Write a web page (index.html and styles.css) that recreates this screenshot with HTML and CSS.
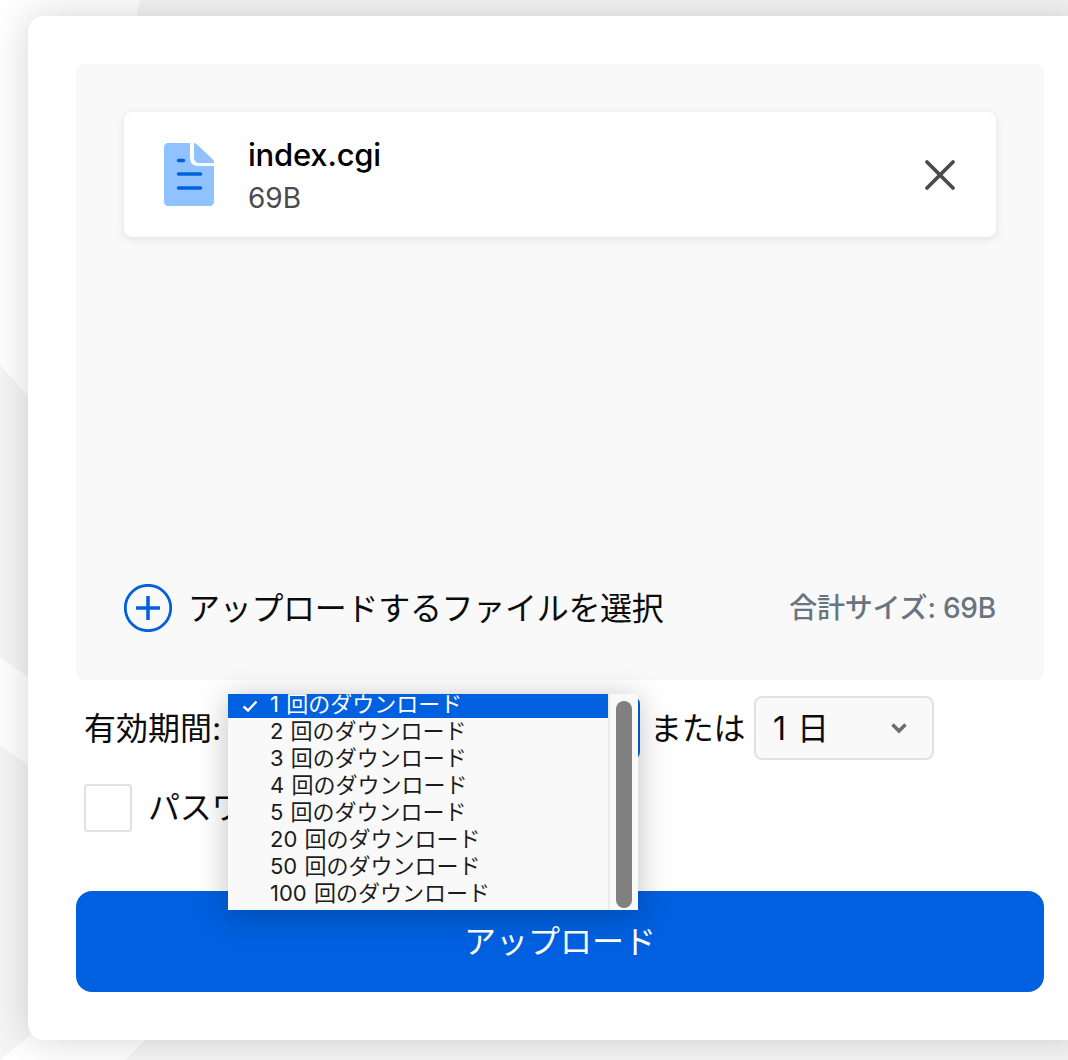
FILE: index.html
```html
<!DOCTYPE html>
<html lang="ja">
<head>
<meta charset="utf-8">
<title>アップロード</title>
<link rel="stylesheet" href="styles.css">
</head>
<body>
<svg class="backdrop" width="1068" height="1060" viewBox="0 0 1068 1060" aria-hidden="true">
  <polygon class="shade" points="140,0 1068,0 1068,60 128,60"/>
  <polygon class="shade" points="0,365 60,432 60,700 0,657"/>
  <polygon class="shade" points="0,745 60,788 60,1010 0,1060"/>
  <polygon class="shade" points="125,1060 150,1035 1068,1035 1068,1060"/>
</svg>
<main class="card">
  <section class="zone">
    <div class="file">
      <svg class="file-icon" width="50" height="63" viewBox="0 0 50 63" aria-hidden="true">
        <path class="page" d="M4 0H26V15C26 20 29 23 34 23H50V59C50 61 48 63 46 63H4C2 63 0 61 0 59V4C0 2 2 0 4 0Z"/>
        <path class="page" d="M30 0C31 0 32 .5 33 1.500L49 16.500C50 17.500 50 18.500 50 20H36C32 20 30 18 30 14Z"/>
        <path class="lines" d="M14.500 17.500H19.500M14.500 31H36.500M14.500 45H36.500"/>
      </svg>
      <div class="file-text">
        <div class="file-name">index.cgi</div>
        <div class="file-size">69B</div>
      </div>
      <svg class="close" width="32" height="32" viewBox="0 0 32 32" aria-hidden="true">
        <path d="M3 3L29 29M29 3L3 29"/>
      </svg>
    </div>
    <div class="zone-foot">
      <div class="add">
        <svg class="plus" width="48" height="48" viewBox="0 0 48 48" aria-hidden="true">
          <circle cx="24" cy="24" r="22.700"/>
          <path d="M12 24H36M24 12V36"/>
        </svg>
        <span class="raised kana">アップロードするファイルを選択</span>
      </div>
      <div class="total raised">合計サイズ: 69B</div>
    </div>
  </section>
  <div class="options">
    <div class="expiry">
      <span class="label raised">有効期間:</span>
      <div class="select-wrap">
        <div class="select-open"></div>
        <div class="menu">
          <ul class="menu-list">
            <li class="opt selected"><svg class="tick" width="16" height="12" viewBox="0 0 16 12" aria-hidden="true"><path d="M1.500 6.500L6 10.500L14.500 1.500"/></svg>1 回のダウンロード</li>
            <li class="opt">2 回のダウンロード</li>
            <li class="opt">3 回のダウンロード</li>
            <li class="opt">4 回のダウンロード</li>
            <li class="opt">5 回のダウンロード</li>
            <li class="opt">20 回のダウンロード</li>
            <li class="opt">50 回のダウンロード</li>
            <li class="opt">100 回のダウンロード</li>
          </ul>
          <div class="track"><div class="thumb"></div></div>
        </div>
      </div>
      <span class="or raised kana">または</span>
      <div class="select-closed">
        <span class="raised day">1 日</span>
        <svg class="chevron" width="18" height="12" viewBox="0 0 18 12" aria-hidden="true"><path d="M2.500 2.500L9 9L15.500 2.500"/></svg>
      </div>
    </div>
    <div class="password">
      <span class="check"></span>
      <span class="pass-text kana">パスワードで保護</span>
    </div>
  </div>
  <button class="upload" type="button">アップロード</button>
</main>
</body>
</html>
```

FILE: styles.css
```css
* { box-sizing: border-box; }
html, body { margin: 0; height: 100%; }
body {
  position: relative;
  width: 1068px;
  height: 1060px;
  overflow: hidden;
  background: #ffffff;
  font-family: Inter, "Noto Sans CJK JP", sans-serif;
  font-size: 32px;
  color: #0c0c0d;
}
.backdrop { position: absolute; left: 0; top: 0; }
.shade { fill: #f5f5f5; }
.card {
  position: relative;
  width: 1064px;
  height: 1024px;
  margin: 16px 0 0 28px;
  padding: 48px;
  background: #fff;
  border-radius: 16px;
  box-shadow: 0 0 40px rgba(0, 0, 0, 0.17);
}
.zone {
  display: flex;
  flex-direction: column;
  justify-content: space-between;
  height: 616px;
  padding: 48px;
  background: #f9f9f9;
  border-radius: 8px;
}
.file {
  display: flex;
  align-items: center;
  height: 125px;
  padding: 0 40px;
  background: #fff;
  border-radius: 8px;
  box-shadow: 0 2px 10px rgba(0, 0, 0, 0.1);
}
.page { fill: #90c2ff; }
.lines { fill: none; stroke: #0060df; stroke-width: 3.500; stroke-linecap: round; }
.file-text { flex: 1; margin-left: 34px; }
.file-name { font-size: 31px; line-height: 46px; font-weight: 500; letter-spacing: -0.2px; color: #000; }
.file-size { font-size: 28px; line-height: 40px; color: #4a4a4f; }
.close { fill: none; stroke: #4a4a4f; stroke-width: 3.800; stroke-linecap: round; }
.zone-foot { display: flex; align-items: center; justify-content: space-between; height: 48px; }
.add { display: flex; align-items: center; gap: 16px; }
.raised { padding-bottom: 4px; }
.kana { letter-spacing: -0.3px; }
.plus { fill: none; stroke: #0060df; stroke-width: 2.800; }
.plus path { stroke-width: 3.500; }
.total { font-size: 28px; font-weight: 500; letter-spacing: -0.2px; color: #68747f; }
.options { display: flex; flex-direction: column; gap: 24px; margin: 16px 0 59px; padding-left: 8px; }
.expiry { display: flex; align-items: center; height: 64px; }
.label { width: 144px; }
.select-wrap { position: relative; width: 412px; height: 64px; }
.select-open { width: 100%; height: 64px; border: 2px solid #0060df; border-radius: 8px; background: #f9f9f9; }
.menu {
  position: absolute;
  left: 0;
  top: -2px;
  display: flex;
  width: 410px;
  height: 216px;
  overflow: hidden;
  background: #f9f9f9;
  box-shadow: 0 4px 30px rgba(0, 0, 0, 0.25);
}
.menu-list { width: 380px; margin: -3px 0 0; padding: 0; list-style: none; }
.opt {
  position: relative;
  height: 27px;
  padding-left: 42px;
  font-size: 22px;
  word-spacing: 1px;
  line-height: 27px;
  white-space: nowrap;
  color: #1c1c1c;
}
.opt.selected { background: #0060df; color: #fff; }
.tick { position: absolute; left: 14px; top: 9px; fill: none; stroke: #fff; stroke-width: 2.400; }
.track { width: 30px; padding: 7px 6px 2px; background: #f9f9f9; border-left: 2px solid #ececec; }
.thumb { height: 207px; background: #808080; border-radius: 8px; }
.or { margin-left: 10px; width: 104px; }
.select-closed {
  display: flex;
  align-items: center;
  justify-content: space-between;
  width: 180px;
  height: 64px;
  padding: 0 24px 0 17px;
  background: #f9f9f9;
  border: 2px solid #dee2e6;
  border-radius: 8px;
}
.day { word-spacing: 2px; }
.chevron { fill: none; stroke: #6e6e6e; stroke-width: 3.600; }
.password { display: flex; align-items: center; gap: 16px; height: 48px; }
.pass-text { padding-bottom: 6px; }
.check { width: 48px; height: 48px; background: #fff; border: 2px solid #dee2e6; border-radius: 4px; }
.upload {
  display: block;
  width: 100%;
  height: 101px;
  padding: 0 0 6px;
  border: 0;
  border-radius: 16px;
  background: #0060df;
  color: #fff;
  font: inherit;
}
```
